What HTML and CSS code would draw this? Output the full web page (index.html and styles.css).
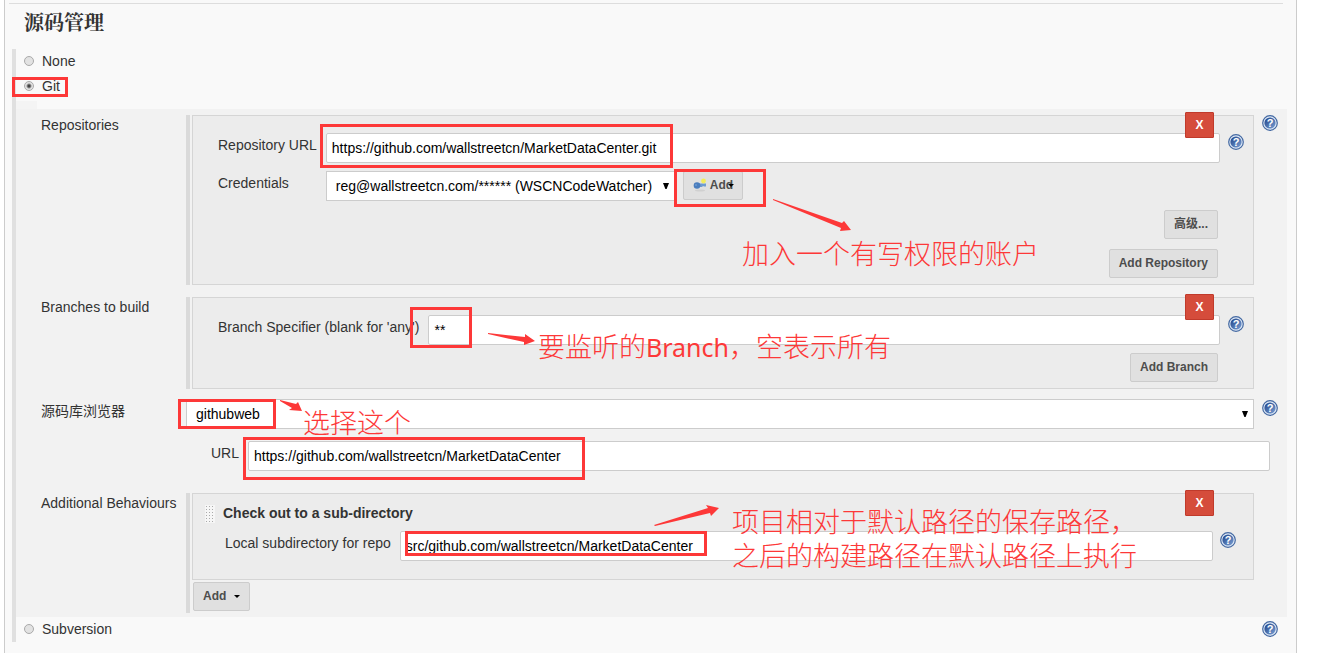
FILE: index.html
```html
<!DOCTYPE html>
<html lang="zh-CN">
<head>
<meta charset="utf-8">
<title>源码管理</title>
<link rel="stylesheet" href="styles.css">
</head>
<body>
<svg class="defs" aria-hidden="true">
  <defs>
    <linearGradient id="blue" x1="0" y1="0" x2="1" y2="1">
      <stop offset="0" stop-color="#1d4287"/><stop offset="1" stop-color="#7ba0d4"/>
    </linearGradient>
    <symbol id="help" viewBox="0 0 16 16">
      <circle cx="8" cy="8" r="7.300" fill="#dfe9f6" stroke="#4469a2" stroke-width="1.200"/>
      <circle cx="8" cy="8" r="5.600" fill="url(#blue)"/>
      <text x="8" y="11.800" text-anchor="middle" class="help-mark">?</text>
    </symbol>
    <symbol id="down" viewBox="0 0 6 6"><path d="M0 0H6L3.600 6H2.400Z"/></symbol>
    <symbol id="caret" viewBox="0 0 6 3"><path d="M0 0H6L3 3Z"/></symbol>
  </defs>
</svg>
<main class="panel">
  <h1 class="title">源码管理</h1>
  <div class="scm">
    <div class="option"><input type="radio" name="scm" id="none"><label for="none">None</label></div>
    <div class="option"><input type="radio" name="scm" id="git" checked><label for="git">Git</label></div>

    <section class="config">
      <div class="row">
        <div class="row-label">Repositories</div>
        <div class="repeat">
          <div class="box">
            <button class="delete" type="button">X</button>
            <div class="fields">
              <label class="name" for="repo">Repository URL</label>
              <div class="entry"><input class="text" id="repo" type="text" value="https://github.com/wallstreetcn/MarketDataCenter.git"><svg class="help"><use href="#help"/></svg></div>
              <label class="name" for="cred">Credentials</label>
              <div class="entry">
                <div class="select cred"><select id="cred"><option>reg@wallstreetcn.com/****** (WSCNCodeWatcher)</option></select><svg class="down"><use href="#down"/></svg></div>
                <button class="btn key-btn" type="button">
                  <svg class="key" viewBox="0 0 14 14"><ellipse cx="7" cy="12.500" rx="5" ry="1" fill="#d0d0d0"/><path d="M5 5.500H13V8.500H11L10 8L9 9H6Z" fill="#6f9bd0"/><circle cx="4" cy="7.500" r="3.300" fill="#4a7dbd"/><circle cx="3" cy="7" r=".8" fill="#86aedb"/><circle cx="10.500" cy="3" r="2.400" fill="#f3ec5a"/></svg><span>Add</span><svg class="caret over"><use href="#caret"/></svg>
                </button>
              </div>
            </div>
            <div class="actions"><button class="btn" type="button">高级...</button><button class="btn" type="button">Add Repository</button></div>
          </div>
        </div>
        <svg class="help"><use href="#help"/></svg>
      </div>

      <div class="row">
        <div class="row-label">Branches to build</div>
        <div class="repeat">
          <div class="box">
            <button class="delete" type="button">X</button>
            <div class="fields">
              <label class="name" for="branch">Branch Specifier (blank for 'any')</label>
              <div class="entry"><input class="text" id="branch" type="text" value="**"><svg class="help"><use href="#help"/></svg></div>
            </div>
            <div class="actions tight"><button class="btn" type="button">Add Branch</button></div>
          </div>
        </div>
        <div class="help"></div>
      </div>

      <div class="row browser">
        <label class="row-label name" for="browser">源码库浏览器</label>
        <div class="select wide"><select id="browser"><option>githubweb</option></select><svg class="down"><use href="#down"/></svg></div>
        <svg class="help"><use href="#help"/></svg>
      </div>

      <div class="url-row">
        <label class="name" for="url">URL</label>
        <input class="text" id="url" type="text" value="https://github.com/wallstreetcn/MarketDataCenter">
      </div>

      <div class="row">
        <div class="row-label">Additional Behaviours</div>
        <div class="repeat">
          <div class="box behaviour">
            <button class="delete" type="button">X</button>
            <div class="grip"></div>
            <div class="behaviour-body">
              <h2 class="subtitle">Check out to a sub-directory</h2>
              <div class="fields sub">
                <label class="name" for="dir">Local subdirectory for repo</label>
                <div class="entry"><input class="text" id="dir" type="text" value="src/github.com/wallstreetcn/MarketDataCenter"><svg class="help"><use href="#help"/></svg></div>
              </div>
            </div>
          </div>
          <button class="btn add" type="button">Add<svg class="caret"><use href="#caret"/></svg></button>
        </div>
        <div class="help"></div>
      </div>
    </section>

    <div class="option"><input type="radio" name="scm" id="svn"><label for="svn">Subversion</label><svg class="help"><use href="#help"/></svg></div>
  </div>
</main>

<div class="notes">
  <svg class="marks" viewBox="0 0 1340 653">
    <g class="frames">
      <rect x="13.500" y="78.500" width="53" height="17"/>
      <rect x="321.500" y="125.500" width="350" height="41"/>
      <rect x="675.500" y="170.500" width="89" height="35"/>
      <rect x="411.500" y="308.500" width="59" height="38"/>
      <rect x="179.500" y="400.500" width="95" height="27"/>
      <rect x="244.500" y="438.500" width="339" height="40"/>
      <rect x="406.500" y="532.500" width="299" height="22"/>
    </g>
    <g class="arrows">
      <path d="M773 199L842 223L844 221L851 230L840 231L841 228L773 200Z"/>
      <path d="M488 333L525 337L525 334L535 341L524 345L524 342L488 334Z"/>
      <path d="M280 400L296 404L298 402L302 411L289 410L292 408L280 401Z"/>
      <path d="M654 525L708 508L706 505L719 508L711 516L710 513L655 526Z"/>
    </g>
  </svg>
  <p class="note account">加入一个有写权限的账户</p>
  <p class="note listen">要监听的<span class="latin">Branch</span>，空表示所有</p>
  <p class="note choose">选择这个</p>
  <p class="note path">项目相对于默认路径的保存路径，<br>之后的构建路径在默认路径上执行</p>
</div>
</body>
</html>
```

FILE: styles.css
```css
* { box-sizing: border-box; }

body {
  margin: 0;
  position: relative;
  background: #fff;
  color: #333;
  font: 14px/20px "Liberation Sans", "Noto Sans CJK SC", sans-serif;
}

button, input, select { font: inherit; margin: 0; }

.defs { position: absolute; width: 0; height: 0; }

.panel {
  min-height: 100vh;
  margin: 0 43px 0 4px;
  padding: 3px 9px 10px 4px;
  border: solid #ccc;
  border-width: 0 1px;
  background: #f9f9f9;
}

.title {
  margin: 0 4px 10px 0;
  padding: 1px 0 1px 15px;
  border-top: 1px solid #ddd;
  font: 700 20px/33px "Noto Serif CJK SC", "Noto Sans CJK SC", serif;
}

.scm { margin-left: 3px; border-left: 4px solid #e0e0e0; }

.option {
  display: flex;
  align-items: center;
  gap: 8px;
  height: 25px;
  padding: 0 9px 1px 8px;
}

.option .help { margin-left: auto; }

.option input {
  appearance: none;
  width: 10px;
  height: 10px;
  border: 1px solid #aaa;
  border-radius: 50%;
  background: #e2e2e2;
}

.option input:checked { background: radial-gradient(circle, #444 1px, #e2e2e2 3px); }

.help { flex: none; width: 16px; height: 16px; }
.help-mark { fill: #fff; font: bold 11px "Liberation Sans", sans-serif; }

.config {
  position: relative;
  margin-top: 10px;
  padding: 6px 9px 4px 25px;
  background: #f2f2f2;
}

.config::before {
  content: "";
  position: absolute;
  left: 0;
  top: -8px;
  width: 21px;
  height: 8px;
  background: #f4f4f4;
}

.row { display: flex; align-items: flex-start; gap: 8px; margin-bottom: 12px; }
.row:last-child { margin-bottom: 0; }
.row-label { flex: none; width: 137px; white-space: nowrap; }
.browser { margin-top: -2px; }
.browser .help { margin-top: 1px; }
.name { padding-top: 2px; white-space: nowrap; }

.repeat {
  flex: 1;
  min-width: 0;
  padding-left: 2px;
  border-left: 4px solid #dadada;
}

.box {
  position: relative;
  padding: 17px 9px 6px 25px;
  border: 1px solid #d5d5d5;
  background: #ececec;
}

.delete {
  position: absolute;
  top: -4px;
  right: 39px;
  width: 29px;
  height: 26px;
  padding: 0;
  border: 1px solid #c03a2b;
  border-radius: 1px;
  background: #d54c3b;
  color: #fff;
  font-weight: bold;
  font-size: 12px;
}

.fields { display: grid; grid-template-columns: auto 1fr; gap: 8px 9px; }
.entry { display: flex; gap: 8px; min-width: 0; }
.entry .help { margin-top: 1px; }

.text {
  flex: 1;
  min-width: 0;
  height: 30px;
  padding: 0 5px;
  border: 1px solid #ccc;
  border-radius: 2px;
  background: #fff;
  color: #000;
}

.select { position: relative; height: 30px; }

.select select {
  appearance: none;
  width: 100%;
  height: 100%;
  padding: 0 9px;
  border: 1px solid #ccc;
  border-radius: 0;
  background: #fff;
  color: #000;
}

.cred { width: 349px; }
.wide { flex: 1; }
.down { position: absolute; right: 6px; top: 12px; width: 6px; height: 6px; }

.btn {
  height: 29px;
  padding: 0 9px 2px;
  border: 1px solid #ccc;
  border-radius: 2px;
  background: #e0e0e0;
  color: #4d4d4d;
  font-size: 12px;
  font-weight: bold;
}

.key-btn { position: relative; display: flex; align-items: center; gap: 3px; }
.key { width: 14px; height: 14px; }
.caret { width: 6px; height: 3px; margin-left: 8px; vertical-align: 2px; fill: #000; }
.caret.over { position: absolute; right: 8px; top: 12px; }

.actions {
  display: flex;
  flex-direction: column;
  align-items: flex-end;
  gap: 10px;
  margin: 9px 26px 0 0;
}

.actions.tight { margin-top: 8px; }

.url-row { display: flex; gap: 9px; margin: 0 8px 22px 170px; }

.behaviour { display: flex; gap: 8px; padding: 9px 17px 18px 12px; }
.behaviour .entry { gap: 7px; }

.grip {
  width: 10px;
  height: 18px;
  margin-top: 2px;
  background: radial-gradient(circle, #aaa 1px, #f6f6f6 1px) 0 0 / 3px 3px;
}

.behaviour-body { flex: 1; min-width: 0; }
.subtitle { margin: 0 0 8px; font-size: 14px; line-height: 20px; }
.sub { padding-left: 2px; }
.add { display: block; margin-top: 2px; margin-left: 1px; margin-bottom: 2px; }

.notes { position: absolute; top: 0; left: 0; pointer-events: none; }
.marks { display: block; width: 1340px; height: 653px; }
.frames { fill: none; stroke: #fd3838; stroke-width: 3; }
.arrows { fill: #fd3838; }

.note {
  position: absolute;
  margin: 0;
  color: #fd3838;
  font: 300 27px/34px Roboto, "Noto Sans CJK SC", sans-serif;
  white-space: nowrap;
}

.latin { font-family: "Noto Sans", sans-serif; font-size: 25px; font-weight: 400; }

.account { left: 742px; top: 238px; }
.listen { left: 538px; top: 330px; }
.choose { left: 303px; top: 407px; }
.path { left: 732px; top: 506px; }
```
